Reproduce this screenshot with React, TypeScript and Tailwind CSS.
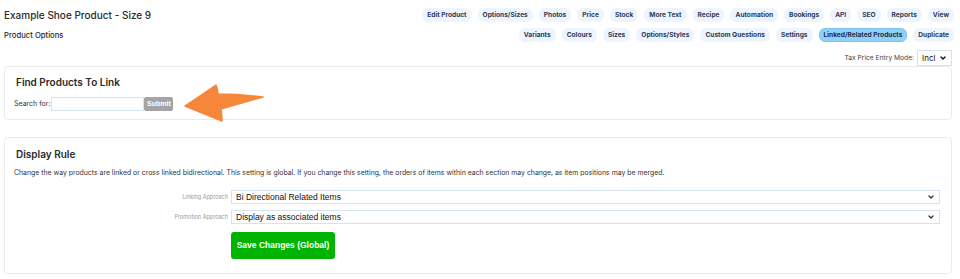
import { ChevronDown } from 'lucide-react';

const rowOne = ['Edit Product', 'Options/Sizes', 'Photos', 'Price', 'Stock', 'More Text', 'Recipe', 'Automation', 'Bookings', 'API', 'SEO', 'Reports', 'View'];
const rowTwo = ['Variants', 'Colours', 'Sizes', 'Options/Styles', 'Custom Questions', 'Settings', 'Linked/Related Products', 'Duplicate'];

function Pill({ label, active }: { label: string; active?: boolean }) {
  return (
    <span
      className={
        active
          ? 'rounded-[6px] border border-[#7cc4f2] bg-[#8fd0f8] px-[4px] py-[1px] text-[6.6px] font-bold leading-[10px] text-[#1f2d4a]'
          : 'rounded-[6px] border border-[#eef5fd] bg-[#edf4fd] px-[4px] py-[1px] text-[6.6px] font-bold leading-[10px] text-[#2c3b58]'
      }
    >
      {label}
    </span>
  );
}

function FakeSelect({ value }: { value: string }) {
  return (
    <div className="flex h-[14px] flex-1 items-center justify-between border border-[#d6e2f2] bg-white pl-[4px] pr-[4px] font-['Liberation_Sans',Arial,sans-serif] text-[8.5px] text-[#111]">
      <span>{value}</span>
      <ChevronDown className="h-[8px] w-[8px] text-[#333]" strokeWidth={4} />
    </div>
  );
}

export default function App() {
  return (
    <div className="h-[279px] w-[960px] overflow-hidden bg-white px-[4px] font-['Inter',sans-serif] text-[#222]">
      <div className="flex justify-between pt-[8px]">
        <div className="flex flex-col">
          <h1 className="text-[10px] font-medium leading-[14px] text-[#2a2a2a]">Example Shoe Product - Size 9</h1>
          <p className="mt-[9px] text-[7.7px] font-medium leading-[10px] text-[#2a2a2a]">Product Options</p>
        </div>
        <div className="flex flex-col items-end gap-[6px] pr-[2px]">
          <div className="flex gap-[6px]">
            {rowOne.map((t) => (
              <Pill key={t} label={t} />
            ))}
          </div>
          <div className="flex gap-[6px]">
            {rowTwo.map((t) => (
              <Pill key={t} label={t} active={t === 'Linked/Related Products'} />
            ))}
          </div>
        </div>
      </div>

      <div className="mt-[8px] flex items-center justify-end gap-[3px] pr-[4px]">
        <span className="text-[6.7px] text-[#444]">Tax Price Entry Mode:</span>
        <div className="flex h-[16px] w-[35px] items-center justify-between border border-[#d6e2f2] px-[4px] text-[8px] text-[#111]">
          <span>Incl</span>
          <ChevronDown className="h-[8px] w-[8px]" strokeWidth={4} />
        </div>
      </div>

      <section className="relative mr-[4px] rounded-[4px] border border-[#ebebeb] px-[9px] pb-[8px] pt-[8px]">
        <h2 className="pl-[2px] text-[10px] font-semibold leading-[14px] text-[#2a2a2a]">Find Products To Link</h2>
        <div className="mt-[8px] flex items-center">
          <span className="mr-[1px] text-[7px] text-[#333]">Search for:</span>
          <div className="h-[14px] w-[93px] border border-[#d6e2f2] bg-white" />
          <button className="h-[14px] w-[29px] rounded-[2px] bg-[#a4a4a4] font-['Liberation_Sans',Arial,sans-serif] text-[7px] font-bold text-white">
            Submit
          </button>
        </div>
        <svg className="absolute left-[176px] top-[15px]" width="86" height="42" viewBox="177 80 86 42">
          <path
            d="M181 104 L212 83 Q214 87 214 92 Q236 92 259 95 Q237 101 217 107 Q218 113 218 119 Z"
            fill="#f6863a"
            stroke="#f6863a"
            strokeWidth="1.5"
            strokeLinejoin="round"
          />
        </svg>
      </section>

      <section className="mr-[4px] mt-[17px] rounded-[4px] border border-[#ebebeb] pb-[14px] pl-[9px] pr-[11px] pt-[9px]">
        <h2 className="pl-[2px] text-[10px] font-semibold leading-[14px] text-[#2a2a2a]">Display Rule</h2>
        <p className="mt-[7px] text-[6.9px] leading-[10px] text-[#333]">
          Change the way products are linked or cross linked bidirectional. This setting is global. If you change this setting, the orders of items within each section may change, as item positions may be merged.
        </p>
        <div className="mt-[12px] flex flex-col gap-[6px]">
          <div className="flex items-center">
            <span className="w-[217px] pr-[3px] text-right text-[5.5px] leading-[8px] text-[#999]">Linking Approach</span>
            <FakeSelect value="Bi Directional Related Items" />
          </div>
          <div className="flex items-center">
            <span className="w-[217px] pr-[3px] text-right text-[5.5px] leading-[8px] text-[#999]">Promotion Approach</span>
            <FakeSelect value="Display as associated items" />
          </div>
          <div className="flex pl-[217px] pt-[2px]">
            <button className="h-[27px] w-[104px] rounded-[3px] bg-[#00b300] font-['Liberation_Sans',Arial,sans-serif] text-[8.5px] font-bold text-white">
              Save Changes (Global)
            </button>
          </div>
        </div>
      </section>
    </div>
  );
}
